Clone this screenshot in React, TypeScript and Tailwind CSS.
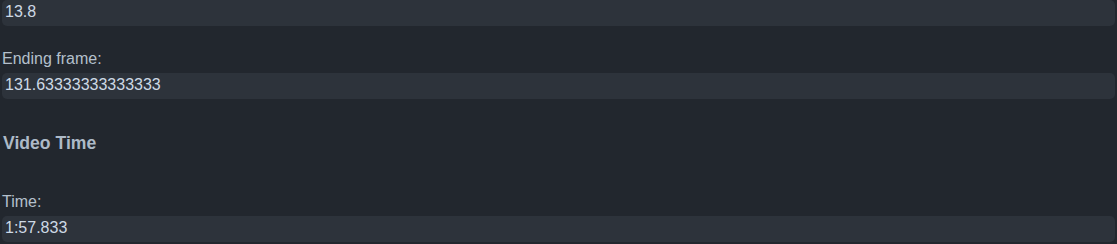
const font = { fontFamily: '"Liberation Sans", Arial, sans-serif' };

function Field({ value }: { value: string }) {
  return (
    <div className="h-[26px] rounded-[5px] bg-[#2d333b] pl-[3px] text-[16px] leading-[24px] text-[#cdd9e5]">
      {value}
    </div>
  );
}

function Label({ text }: { text: string }) {
  return <div className="mb-[5px] text-[16px] leading-[18px] text-[#b4c0cc]">{text}</div>;
}

export default function App() {
  return (
    <div className="h-[244px] w-[1117px] overflow-hidden bg-[#22272e] pl-[2px] pr-[2px]" style={font}>
      <Field value="13.8" />
      <div className="mt-[24px]">
        <Label text="Ending frame:" />
        <Field value="131.63333333333333" />
      </div>
      <h3 className="mt-[34px] pl-px text-[17.6px] font-bold leading-[21px] text-[#adbac7]">Video Time</h3>
      <div className="mt-[39px]">
        <Label text="Time:" />
        <Field value="1:57.833" />
      </div>
    </div>
  );
}
